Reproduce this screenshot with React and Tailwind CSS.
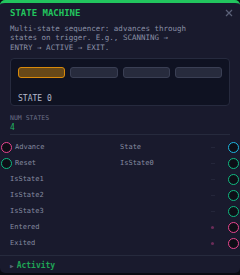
import React from 'react';

const mono = { fontFamily: '"DejaVu Sans Mono", "Liberation Mono", monospace' };

const Port = ({ color }) => (
  <span className={`block w-[11px] h-[11px] rounded-full border-[1.5px] bg-[#0d0e16] ${color}`} />
);

const rows = [
  { input: 'Advance', inColor: 'border-[#e8468f]', output: 'State', outColor: 'border-[#1fb5e0]' },
  { input: 'Reset', inColor: 'border-[#10b981]', output: 'IsState0', outColor: 'border-[#10b981]' },
  { output: 'IsState1', outColor: 'border-[#10b981]' },
  { output: 'IsState2', outColor: 'border-[#10b981]' },
  { output: 'IsState3', outColor: 'border-[#10b981]' },
  { output: 'Entered', outColor: 'border-[#e8468f]', dot: true },
  { output: 'Exited', outColor: 'border-[#e8468f]', dot: true },
];

const App = () => {
  const states = [0, 1, 2, 3];
  const current = 0;

  return (
    <div className="w-[240px] h-[275px] bg-[#0a0b12]" style={mono}>
      <div className="w-[240px] h-[273px] rounded-[5px] overflow-hidden bg-[#191a2d] border-t-[3px] border-[#22c55e] flex flex-col">
        {/* Header */}
        <div className="px-[10px] pt-[4px] flex items-start justify-between">
          <h2 className="text-[9px] leading-[11px] font-bold text-[#22c55e] mt-[0.5px]">STATE MACHINE</h2>
          <svg width="8" height="8" viewBox="0 0 8 8" className="mt-[2px] mr-[-3px]" stroke="#5b6178" strokeWidth="1.2">
            <path d="M1 1L7 7M7 1L1 7" />
          </svg>
        </div>
        <p className="px-[10px] w-[200px] mt-[5px] text-[7.5px] leading-[9.5px] text-[#8a90a6]">
          Multi-state sequencer: advances through states on trigger. E.g., SCANNING → ENTRY → ACTIVE → EXIT.
        </p>

        {/* State display */}
        <div className="mx-[10px] mt-[6px] h-[51px] rounded-[4px] border border-[#262a3e] bg-[#0f1222] px-[7px] pt-[8px]">
          <div className="grid grid-cols-4 gap-[5px]">
            {states.map((s) => (
              <div
                key={s}
                className={
                  s === current
                    ? 'h-[11px] rounded-[3px] border border-[#d98a0b] bg-[#674818]'
                    : 'h-[11px] rounded-[3px] border border-[#3a3f54] bg-[#272b3d]'
                }
              />
            ))}
          </div>
          <div className="mt-[16px] text-[8px] leading-[10px] text-[#b5bacb]">STATE {current}</div>
        </div>

        {/* Num states */}
        <div className="px-[10px] mt-[8px]">
          <div className="text-[6.5px] leading-[8px] text-[#6b7088]">NUM STATES</div>
          <div className="text-[8px] leading-[11px] text-[#22b463]">4</div>
        </div>

        <div className="mx-[10px] mt-[1px] h-px bg-[#262a3d]" />

        {/* Ports */}
        <div className="mt-[4px] flex flex-col">
          {rows.map((r, i) => (
            <div key={i} className="h-[16px] flex items-center text-[7px] text-[#858aa0]">
              {r.input ? (
                <div className="w-[120px] flex items-center">
                  <span className="ml-[1px]"><Port color={r.inColor} /></span>
                  <span className="ml-[3px]">{r.input}</span>
                </div>
              ) : (
                <div className="w-[10px]" />
              )}
              <span className="flex-1">{r.output}</span>
              {r.dot ? (
                <span className="w-[3px] h-[3px] rounded-full bg-[#6b2c58] mr-[14px]" />
              ) : (
                <span className="w-[4px] h-px bg-[#24263a] mr-[13px]" />
              )}
              <span className="mr-[1px]"><Port color={r.outColor} /></span>
            </div>
          ))}
        </div>

        <div className="mt-[4px] h-px bg-[#262a3d]" />

        {/* Activity */}
        <div className="px-[10px] pt-[2px] h-[18px] flex items-center gap-[3px]">
          <span className="text-[6px] text-[#5b6178]">▶</span>
          <span className="text-[8px] font-bold text-[#1fa556]">Activity</span>
        </div>
      </div>
    </div>
  );
};

export default App;
